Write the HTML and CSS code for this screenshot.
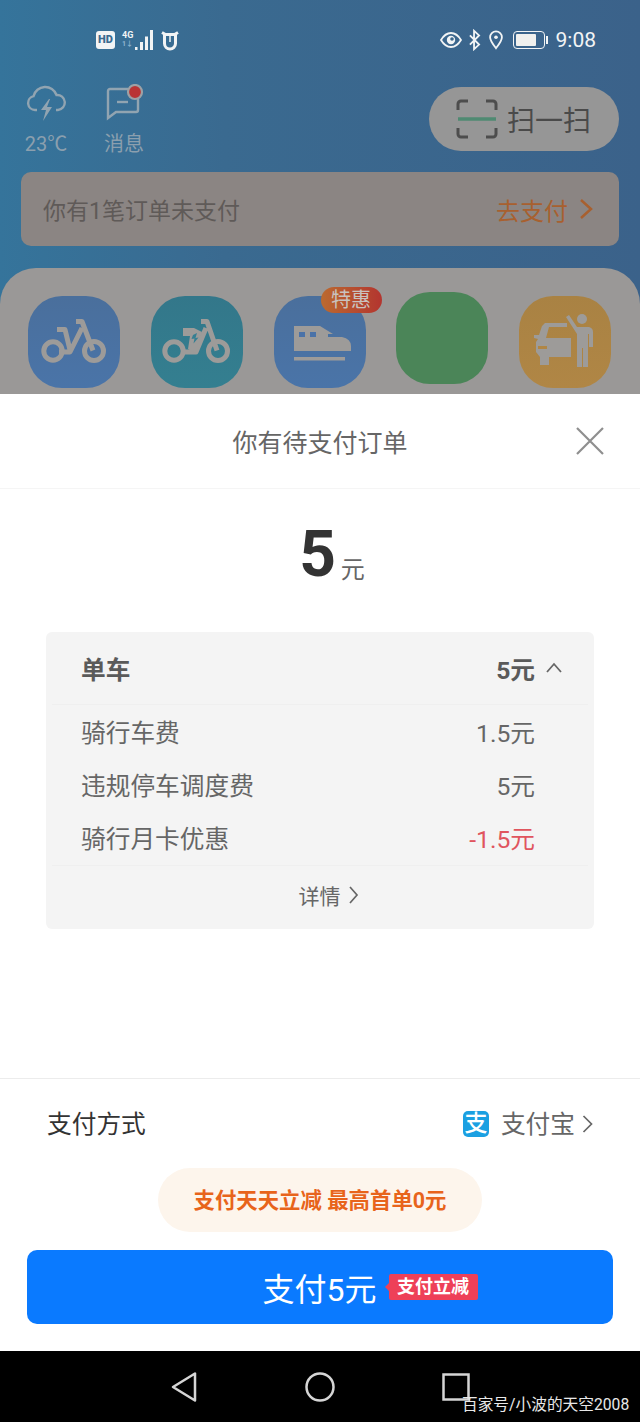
FILE: index.html
```html
<!DOCTYPE html>
<html lang="zh">
<head>
<meta charset="utf-8">
<title>你有待支付订单</title>
<link rel="stylesheet" href="styles.css">
</head>
<body>
<div class="screen">
  <section class="backdrop">
    <div class="status">
      <div class="status-left">
        <span class="hd">HD</span>
        <span class="net"><span class="net-t">4G</span><span class="net-a">1↓</span></span>
        <svg class="signal" width="22" height="22" viewBox="0 0 22 22"><path d="M2 18h2.500v3H2zM7 13h3v8H7zM12 7.500h3V21h-3zM17 1h3v20h-3z" fill="#f2f4f5"/></svg>
        <svg class="alarm" width="20" height="22" viewBox="0 0 20 22"><path d="M2 3.500l3.500 2M18 3.500l-3.500 2M4.500 5.500h11v9a5.500 5.500 0 0 1-11 0z" stroke="#f2f4f5" stroke-width="3" fill="none"/><path d="M10 6v7" stroke="#f2f4f5" stroke-width="1.500"/></svg>
      </div>
      <div class="status-right">
        <svg class="st-eye" width="22" height="16" viewBox="0 0 22 16"><path d="M1 8c3-5 6-7 10-7s7 2 10 7c-3 5-6 7-10 7S4 13 1 8z" fill="none" stroke="#f2f4f5" stroke-width="1.800"/><circle cx="11" cy="8" r="4.200" fill="#f2f4f5"/><circle cx="12" cy="7" r="1.800" fill="#3b678c"/></svg>
        <svg class="st-bt" width="13" height="22" viewBox="0 0 13 24"><path d="M1.500 7l10 10-5.500 5V2l5.500 5-10 10" fill="none" stroke="#f2f4f5" stroke-width="2"/></svg>
        <svg class="st-pin" width="16" height="20" viewBox="0 0 16 22"><path d="M8 20C4 15 1.500 12 1.500 8a6.500 6.500 0 0 1 13 0c0 4-2.500 7-6.500 12z" fill="none" stroke="#f2f4f5" stroke-width="2"/><circle cx="8" cy="8" r="2" fill="#f2f4f5"/></svg>
        <span class="battery"><span class="battery-fill"></span></span>
        <span class="battery-tip"></span>
        <span class="clock">9:08</span>
      </div>
    </div>

    <div class="top-row">
      <div class="mini weather">
        <svg width="40" height="38" viewBox="0 0 40 38"><path d="M11 26H9a7 7 0 0 1-1.500-13.800A12 12 0 0 1 30.500 11 7.500 7.500 0 0 1 32 26h-2" fill="none" stroke="#91a4b1" stroke-width="2.400"/><path d="M23 15l-8 11h5l-3 11 9-14h-5l3-8z" fill="#91a4b1"/></svg>
        <span class="mini-label">23℃</span>
      </div>
      <div class="mini message">
        <svg width="40" height="38" viewBox="0 0 40 38"><path d="M24 5H6a2 2 0 0 0-2 2v27l8-6h20a2 2 0 0 0 2-2V14" fill="none" stroke="#91a4b1" stroke-width="2.400"/><path d="M13 18h11" stroke="#91a4b1" stroke-width="2.400"/><circle cx="31" cy="8" r="7" fill="#b93434" stroke="#9da1a5" stroke-width="2.200"/></svg>
        <span class="mini-label">消息</span>
      </div>
      <div class="scan">
        <svg width="42" height="42" viewBox="0 0 42 42"><path d="M12 3H5a3 3 0 0 0-3 3v6M30 3h7a3 3 0 0 1 3 3v6M12 39H5a3 3 0 0 1-3-3v-6M30 39h7a3 3 0 0 0 3-3v-6" fill="none" stroke="#4d4d4d" stroke-width="3"/><path d="M2 21h38" stroke="#4f8a72" stroke-width="3.500"/></svg>
        <span>扫一扫</span>
      </div>
    </div>

    <div class="alert">
      <span class="alert-text">你有1笔订单未支付</span>
      <span class="alert-go">去支付<svg width="14" height="22" viewBox="0 0 14 22"><path d="M2 2l10 9-10 9" fill="none" stroke="#a8602f" stroke-width="2.500"/></svg></span>
    </div>

    <div class="services">
      <div class="tile blue">
        <svg class="glyph" viewBox="0 0 92 92"><g fill="none" stroke="#9d9b99" stroke-width="5"><circle cx="25" cy="55" r="9.200"/><circle cx="66" cy="55" r="9.500"/><path d="M48 25.500h6l11 29M54 32L42 56H31M29 33.500h8L42 54" stroke-linejoin="round"/></g></svg>
      </div>
      <div class="tile teal">
        <svg class="glyph" viewBox="0 0 92 92"><g fill="none" stroke="#9d9b99" stroke-width="5"><circle cx="23" cy="55" r="9.200"/><circle cx="67" cy="55" r="9.500"/><path d="M50 25.500h6l10 29M55 32L45 56H30" stroke-linejoin="round"/></g><path d="M32 32h11l8 4-7 21-7-4 2-13h-7z" fill="#9d9b99"/><path d="M42 39l4-2-1.500 5 3-.5-5 6 1-5-3 .5z" fill="#357f92"/></svg>
      </div>
      <div class="tile-wrap">
        <div class="tile blue">
          <svg class="glyph" viewBox="0 0 92 92"><path d="M20 30H46L59 38H54V41H68Q77 43 77 50V55H20Z" fill="#9d9b99"/><path d="M25 36h6v5h-6zM36 36h6v5h-6z" fill="#4a72a8"/><path d="M20 61h51v3.500H20z" fill="#9d9b99"/></svg>
        </div>
        <span class="badge">特惠</span>
      </div>
      <div class="tile green raised"></div>
      <div class="tile orange">
        <svg class="glyph" viewBox="0 0 92 92"><path d="M26 27H48V31H30L27 42H52V61H30V69H21V61L17 56V46L19 43L15 42V39L20 39L23 30Z" fill="#9d9b99"/><path d="M19 50h9v3h-9z" fill="#b08645"/><circle cx="63" cy="23" r="5" fill="#9d9b99"/><path d="M47 21l3-2 8 12h12q4 1 4 5v15h-4V38h-1v33h-5V52h-1v19h-5V38z" fill="#9d9b99"/></svg>
      </div>
    </div>
  </section>

  <section class="sheet">
    <header class="sheet-head">
      <h1>你有待支付订单</h1>
      <svg class="close" width="30" height="30" viewBox="0 0 30 30"><path d="M2 2l26 26M28 2L2 28" stroke="#8f8f8f" stroke-width="2.200"/></svg>
    </header>

    <div class="amount"><strong>5</strong><span>元</span></div>

    <div class="bill">
      <div class="bill-head">
        <span>单车</span>
        <span class="bill-total">5元</span>
        <svg width="18" height="12" viewBox="0 0 18 12"><path d="M2 10l7-8 7 8" fill="none" stroke="#666" stroke-width="1.800"/></svg>
      </div>
      <ul class="bill-rows">
        <li><span>骑行车费</span><span>1.5元</span></li>
        <li><span>违规停车调度费</span><span>5元</span></li>
        <li><span>骑行月卡优惠</span><span class="minus">-1.5元</span></li>
      </ul>
      <div class="bill-more">详情<svg width="11" height="18" viewBox="0 0 11 18"><path d="M2 1l7 8-7 8" fill="none" stroke="#666" stroke-width="1.700"/></svg></div>
    </div>

    <div class="sheet-foot">
      <div class="method">
        <span class="method-label">支付方式</span>
        <span class="method-pick"><span class="alipay">支</span><span class="method-name">支付宝</span><svg width="11" height="20" viewBox="0 0 11 20"><path d="M1.500 2l8 8-8 8" fill="none" stroke="#666" stroke-width="1.700"/></svg></span>
      </div>
      <div class="promo">支付天天立减 最高首单0元</div>
      <button class="pay"><span>支付5元</span><span class="pay-tag">支付立减</span></button>
    </div>
  </section>

  <nav class="nav">
    <svg width="28" height="32" viewBox="0 0 28 32"><path d="M25 2.500v27L3 16z" fill="none" stroke="#d5d5d5" stroke-width="2.500" stroke-linejoin="round"/></svg>
    <svg width="32" height="32" viewBox="0 0 32 32"><circle cx="16" cy="16" r="13.500" fill="none" stroke="#d5d5d5" stroke-width="2.500"/></svg>
    <svg width="28" height="28" viewBox="0 0 28 28"><rect x="1.500" y="1.500" width="25" height="25" fill="none" stroke="#d5d5d5" stroke-width="2.500"/></svg>
    <span class="watermark">百家号/小波的天空2008</span>
  </nav>
</div>
</body>
</html>
```
FILE: styles.css
```css
* { box-sizing: border-box; }
html, body { margin: 0; padding: 0; }
body { width: 640px; height: 1422px; overflow: hidden; font-family: Roboto, "Noto Sans CJK SC", sans-serif; background: #fff; }
svg { display: block; flex: none; }
.screen { width: 640px; height: 1422px; display: flex; flex-direction: column; }

.backdrop { height: 394px; overflow: hidden; background: linear-gradient(90deg, #35749b 0%, #3a6a90 35%, #3b628a 100%); display: flex; flex-direction: column; }
.status { height: 80px; padding: 28px 44px 0 96px; display: flex; justify-content: space-between; align-items: flex-start; color: #f2f4f5; }
.status-left { display: flex; align-items: center; height: 24px; }
.hd { width: 19px; height: 18px; border-radius: 3px; background: #f2f4f5; color: #3a6a90; font-size: 11px; font-weight: 900; line-height: 18px; text-align: center; }
.net { display: flex; flex-direction: column; margin-left: 7px; line-height: 9px; font-size: 9px; font-weight: 700; width: 12px; }
.net-a { color: #8fb4cf; font-size: 7px; }
.signal { margin-left: -1px; }
.alarm { margin-left: 5px; }
.status-right { display: flex; align-items: center; height: 24px; }
.st-bt { margin-left: 6px; }
.st-pin { margin-left: 7px; }
.battery { width: 32px; height: 18px; margin-left: 9px; border: 1.500px solid #f2f4f5; border-radius: 4px; padding: 2px; display: block; }
.battery-fill { display: block; width: 20px; height: 100%; background: #f0f0ee; border-radius: 1px; }
.battery-tip { width: 2px; height: 8px; background: #f2f4f5; margin-left: 1px; }
.clock { font-size: 21px; color: #f2f4f5; margin-left: 8px; }

.top-row { height: 92px; padding: 4px 21px 0 0; display: flex; align-items: flex-start; }
.mini { width: 78px; display: flex; flex-direction: column; align-items: center; }
.weather { margin-left: 7px; }
.mini svg { height: 38px; }
.mini-label { font-size: 20px; line-height: 26px; margin-top: 9px; color: #8b9fae; }
.scan { margin: 3px 0 0 auto; width: 190px; height: 64px; border-radius: 32px; background: #969696; display: flex; align-items: center; padding-left: 27px; gap: 9px; color: #4a4a4a; font-size: 28px; }

.alert { height: 74px; margin: 0 21px; border-radius: 10px; background: #8b8583; display: flex; align-items: center; justify-content: space-between; padding: 0 26px 0 22px; }
.alert-text { font-size: 23px; color: #5f5a58; }
.alert-go { font-size: 24px; color: #a8602f; display: flex; align-items: center; gap: 11px; }

.services { flex: 1; margin-top: 22px; border-radius: 36px 36px 0 0; background: #9a9897; padding: 28px 29px 0 28px; display: flex; justify-content: space-between; align-items: flex-start; }
.tile { width: 92px; height: 92px; border-radius: 34px; }
.tile-wrap { position: relative; }
.blue { background: linear-gradient(180deg, #4a6f9c, #4a74a8); }
.teal { background: linear-gradient(180deg, #33778a, #347f90); }
.green { background: #4b8558; }
.orange { background: linear-gradient(180deg, #a98243, #b08645); }
.raised { margin-top: -4px; }
.glyph { width: 92px; height: 92px; }
.badge { position: absolute; top: -9px; left: 47px; width: 61px; height: 26px; border-radius: 13px; background: linear-gradient(90deg, #bb6a30, #b3352f); color: #c9c2be; font-size: 20px; line-height: 26px; text-align: center; }

.sheet { flex: 1; background: #fff; display: flex; flex-direction: column; }
.sheet-head { position: relative; height: 95px; border-bottom: 1px solid #f5f5f5; display: flex; align-items: center; justify-content: center; }
.sheet-head h1 { margin: 0; font-size: 25px; font-weight: 400; color: #666; }
.close { position: absolute; right: 35px; top: 32px; }
.amount { height: 143px; display: flex; align-items: flex-start; justify-content: center; padding: 26px 0 0 24px; color: #333; }
.amount strong { font-size: 64px; line-height: 80px; font-weight: 700; }
.amount span { font-size: 24px; line-height: 34px; color: #666; margin: 38px 0 0 5px; }

.bill { margin: 0 46px; height: 297px; border-radius: 6px; background: #f4f4f4; display: flex; flex-direction: column; color: #666; font-size: 24.700px; }
.bill-head { height: 73px; margin: 0 6px; padding: 0 25px 0 29px; border-bottom: 1px solid #efefef; display: flex; align-items: center; font-weight: 700; color: #5a5a5a; }
.bill-total { margin-left: auto; margin-right: 10px; }
.bill-rows { list-style: none; margin: 0 6px; padding: 0 53px 0 29px; height: 161px; border-bottom: 1px solid #efefef; }
.bill-rows li { height: 53px; padding-bottom: 1px; display: flex; justify-content: space-between; align-items: center; }
.minus { color: #e0555e; }
.bill-more { flex: 1; display: flex; align-items: center; justify-content: center; gap: 7px; font-size: 21px; padding: 0 0 6px 17px; }

.sheet-foot { margin-top: auto; height: 273px; border-top: 1px solid #ececec; padding: 0 27px; display: flex; flex-direction: column; }
.method { height: 89px; padding: 0 20px; display: flex; align-items: center; justify-content: space-between; }
.method-label { font-size: 24.700px; color: #333; margin-top: -4px; }
.method-pick { display: flex; align-items: center; font-size: 24.700px; color: #666; }
.alipay { width: 26px; height: 26px; border-radius: 5px; background: #1ba0e2; color: #fff; font-size: 23px; font-weight: 500; line-height: 25px; text-align: center; }
.method-name { margin: -4px 7px 0 12px; }
.promo { align-self: center; width: 324px; height: 64px; border-radius: 32px; background: #fdf5ec; color: #e8641b; font-size: 21.400px; font-weight: 700; line-height: 66px; text-align: center; }
.pay { margin-top: 18px; height: 74px; width: 586px; border: 0; border-radius: 10px; background: #0a7aff; color: #fff; font-family: inherit; font-size: 32px; display: flex; align-items: center; justify-content: center; gap: 12px; padding: 0 0 0 100px; }
.pay-tag { position: relative; width: 89px; height: 26px; border-radius: 2px; background: #ee4058; font-size: 18px; font-weight: 700; line-height: 26px; text-align: center; }
.pay-tag::before { content: ""; position: absolute; left: -4px; top: 9px; border: 4px solid transparent; border-left-width: 0; border-right-color: #ee4058; }

.nav { position: relative; height: 71px; background: #000; display: flex; align-items: center; padding: 0 170px; justify-content: space-between; }
.watermark { position: absolute; left: 462px; top: 43px; color: #e8e8e8; font-size: 15.700px; line-height: 22px; white-space: nowrap; }
```
